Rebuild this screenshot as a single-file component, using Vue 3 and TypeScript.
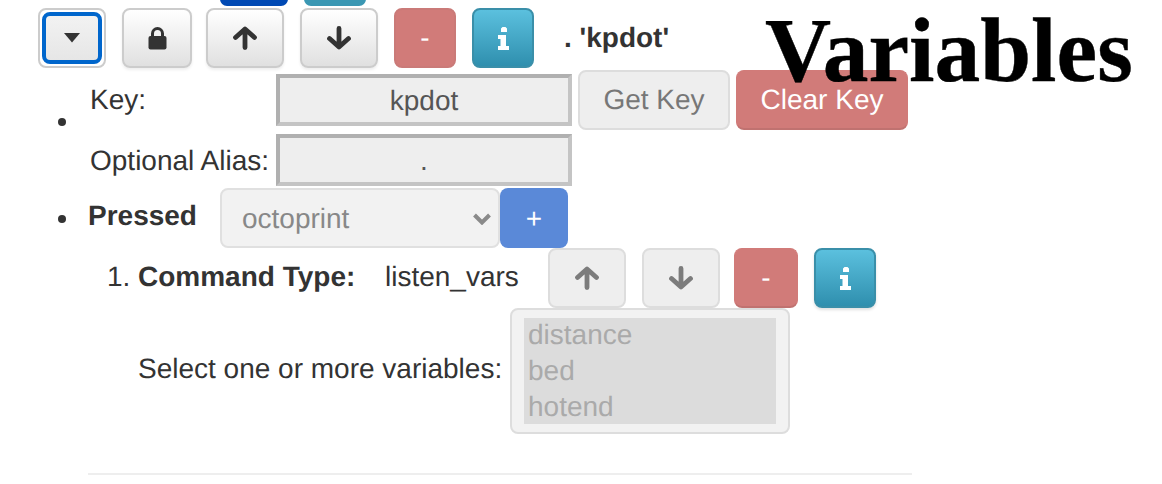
<script setup lang="ts">
const variables: string[] = ['distance', 'bed', 'hotend']
</script>

<template>
  <div class="page">
    <h1 class="title">Variables</h1>

    <div class="clipped-row">
      <span class="stub stub-blue"></span>
      <span class="stub stub-teal"></span>
    </div>

    <div class="toolbar">
      <span class="focus-ring">
        <button class="btn btn-default btn-focus" type="button">
          <svg class="icon" width="16" height="10" viewBox="0 0 16 10"><path d="M0 0h16l-8 9.500z" fill="#333" /></svg>
        </button>
      </span>
      <button class="btn btn-default btn-lock" type="button">
        <svg width="19" height="23" viewBox="0 0 19 23">
          <path d="M4.500 10V6.500a5 5 0 0 1 10 0V10" fill="none" stroke="#333" stroke-width="3" />
          <rect x="0.500" y="9" width="18" height="13.500" rx="2" fill="#333" />
        </svg>
      </button>
      <button class="btn btn-default btn-arrow" type="button">
        <svg width="24" height="24" viewBox="0 0 24 24"><path d="M2.500 11.500 12 3 21.500 11.500M12 5v16.500" fill="none" stroke="#333" stroke-width="4.800" stroke-linecap="round" stroke-linejoin="round" /></svg>
      </button>
      <button class="btn btn-default btn-arrow" type="button">
        <svg width="24" height="24" viewBox="0 0 24 24"><path d="M2.500 12.500 12 21 21.500 12.500M12 19V2.500" fill="none" stroke="#333" stroke-width="4.800" stroke-linecap="round" stroke-linejoin="round" /></svg>
      </button>
      <button class="btn btn-danger btn-small" type="button">-</button>
      <button class="btn btn-info btn-small" type="button">
        <svg width="11" height="23" viewBox="0 0 11 23"><path d="M3 1.500 4.500 0h3L9 1.500V5H3zM0 8h8v11h3v4H0v-4h2.500v-7H0z" fill="#fff" /></svg>
      </button>
      <strong class="key-title">. 'kpdot'</strong>
    </div>

    <div class="key-block">
      <span class="bullet bullet-key"></span>
      <div class="key-fields">
        <div class="field-row field-row-key">
          <label class="field-label">Key:</label>
          <input class="text-input" value="kpdot" readonly />
          <button class="btn btn-plain btn-get" type="button">Get Key</button>
          <button class="btn btn-clear" type="button">Clear Key</button>
        </div>
        <div class="field-row field-row-alias">
          <label class="field-label">Optional Alias:</label>
          <input class="text-input" value="." readonly />
        </div>
      </div>
    </div>

    <div class="pressed-row">
      <span class="bullet"></span>
      <strong class="pressed-label">Pressed</strong>
      <div class="select-box">
        <span>octoprint</span>
        <svg width="20" height="12" viewBox="0 0 20 12"><path d="M2.500 2 10 9.500 17.500 2" fill="none" stroke="#8a8a8a" stroke-width="4" /></svg>
      </div>
      <button class="btn btn-add" type="button">+</button>
    </div>

    <div class="command-row">
      <span class="ordinal">1.</span>
      <strong class="command-label">Command Type:</strong>
      <span class="command-value">listen_vars</span>
      <button class="btn btn-plain btn-arrow" type="button">
        <svg width="24" height="24" viewBox="0 0 24 24"><path d="M2.500 11.500 12 3 21.500 11.500M12 5v16.500" fill="none" stroke="#7c7c7c" stroke-width="4.800" stroke-linecap="round" stroke-linejoin="round" /></svg>
      </button>
      <button class="btn btn-plain btn-arrow btn-down2" type="button">
        <svg width="24" height="24" viewBox="0 0 24 24"><path d="M2.500 12.500 12 21 21.500 12.500M12 19V2.500" fill="none" stroke="#7c7c7c" stroke-width="4.800" stroke-linecap="round" stroke-linejoin="round" /></svg>
      </button>
      <button class="btn btn-clear btn-minus2" type="button">-</button>
      <button class="btn btn-info btn-small btn-info2" type="button">
        <svg width="11" height="23" viewBox="0 0 11 23"><path d="M3 1.500 4.500 0h3L9 1.500V5H3zM0 8h8v11h3v4H0v-4h2.500v-7H0z" fill="#fff" /></svg>
      </button>
    </div>

    <div class="vars-row">
      <label class="vars-label">Select one or more variables:</label>
      <div class="listbox">
        <div class="listbox-inner">
          <div v-for="name in variables" :key="name" class="option">{{ name }}</div>
        </div>
      </div>
    </div>

    <hr class="rule" />
  </div>
</template>

<style>
html, body { margin: 0; background: #fff; }
</style>

<style scoped>
.page {
  position: relative;
  width: 1162px;
  height: 484px;
  overflow: hidden;
  background: #fff;
  color: #333;
  font-family: "Liberation Sans", Arial, sans-serif;
  font-size: 28px;
  line-height: 40px;
  text-rendering: geometricPrecision;
}
.title {
  position: absolute;
  z-index: 2;
  left: 765px;
  top: 0;
  margin: 0;
  color: #000;
  font-family: "Liberation Serif", "Times New Roman", serif;
  font-size: 91.500px;
  font-weight: 700;
  line-height: 100px;
  white-space: nowrap;
  -webkit-text-stroke: 0.4px #000;
}
.clipped-row {
  display: flex;
  height: 6px;
  padding-left: 220px;
  gap: 16px;
  align-items: flex-end;
  position: relative;
}
.stub {
  display: block;
  height: 20px;
  border-radius: 0 0 7px 7px;
  flex: none;
}
.stub-blue { width: 68px; background: #0049b4; }
.stub-teal { width: 62px; background: #3a97b3; }

.btn {
  box-sizing: border-box;
  display: inline-flex;
  align-items: center;
  justify-content: center;
  flex: none;
  margin: 0;
  padding: 0;
  height: 60px;
  border: 2px solid #ccc;
  border-radius: 8px;
  font-family: inherit;
  font-size: 28px;
  color: #333;
  position: relative;
  text-rendering: geometricPrecision;
}
.btn-default {
  background: linear-gradient(#fff, #e0e0e0);
  box-shadow: inset 0 2px 0 rgba(255, 255, 255, .15), 0 2px 3px rgba(0, 0, 0, .07);
}
.toolbar {
  display: flex;
  align-items: center;
  height: 60px;
  margin-top: 2px;
  padding-left: 38px;
  position: relative;
}
.focus-ring {
  box-sizing: border-box;
  display: flex;
  width: 68px;
  height: 60px;
  padding: 2px;
  border: 2px solid #ccc;
  border-radius: 8px;
  background: #fff;
  margin-right: 16px;
}
.btn-focus {
  width: 60px;
  height: 52px;
  border: 4px solid #0066cc;
  border-radius: 8px;
  margin: 0;
  background: linear-gradient(#f2f2f2, #e6e6e6);
  box-shadow: none;
}
.icon { display: block; }
.btn-lock { width: 70px; margin-right: 14px; }
.btn-arrow { width: 78px; margin-right: 16px; }
.btn-small { width: 62px; margin-right: 16px; }
.btn-danger {
  background: #d17b79;
  border-color: #ca7a78;
  color: #fff;
}
.btn-info {
  background: linear-gradient(#5bc0de, #2f8fae);
  border-color: #3a8fa9;
  color: #fff;
}
.key-title { margin-left: 14px; font-size: 28px; }

.key-block {
  display: flex;
  align-items: flex-start;
  margin-top: 2px;
  padding-left: 58px;
  height: 118px;
}
.bullet {
  display: block;
  flex: none;
  width: 8px;
  height: 8px;
  border-radius: 50%;
  background: #333;
}
.bullet-key { margin-top: 48px; }
.key-fields { margin-left: 24px; }
.field-row { display: flex; align-items: center; }
.field-row-key { height: 60px; }
.field-row-key .field-label { margin-top: 0; }
.field-row-alias { height: 52px; margin-top: 4px; }
.field-row-alias .field-label { margin-top: 2px; }
.field-label { width: 186px; flex: none; }
.text-input {
  box-sizing: border-box;
  display: block;
  width: 296px;
  height: 52px;
  padding: 2px 0 0;
  border-width: 4px;
  border-style: solid;
  border-color: #b0b0b0 #c4c4c4 #c4c4c4 #b0b0b0;
  border-radius: 0;
  background: #eee;
  color: #555;
  font-family: inherit;
  font-size: 28px;
  text-align: center;
  text-rendering: geometricPrecision;
}
.btn-get { width: 152px; margin-left: 6px; margin-right: 6px; }
.btn-plain {
  background: #eee;
  border: 2px solid #ddd;
  color: #777;
}
.btn-clear {
  background: #d17b79;
  border: 1px solid #d17b79;
  border-bottom: 2px solid #c07270;
  color: #fff;
  width: 172px;
}
.pressed-row {
  display: flex;
  align-items: flex-start;
  height: 60px;
  padding-left: 58px;
}
.pressed-row .bullet { margin-top: 27px; }
.pressed-label { margin-left: 22px; width: 132px; flex: none; line-height: 56px; }
.select-box {
  box-sizing: border-box;
  display: flex;
  align-items: center;
  justify-content: space-between;
  width: 280px;
  height: 60px;
  padding: 2px 6px 0 20px;
  border: 2px solid #e0e0e0;
  border-radius: 8px;
  background: #f2f2f2;
  color: #888;
}
.btn-add {
  width: 68px;
  background: #5a89d8;
  border: none;
  color: #fff;
  font-size: 28px;
  padding-top: 2px;
}
.command-row {
  display: flex;
  align-items: flex-start;
  height: 60px;
  line-height: 58px;
  padding-left: 107px;
}
.ordinal { width: 31px; flex: none; }
.command-label { width: 247px; flex: none; }
.command-value { width: 163px; flex: none; }
.command-row .btn-down2 { margin-right: 14px; }
.btn-minus2 { width: 64px; margin-right: 16px; }
.btn-info2 { box-shadow: 0 2px 3px rgba(0, 0, 0, .12); }

.vars-row {
  display: flex;
  align-items: center;
  padding-left: 138px;
  height: 126px;
}
.vars-label { width: 372px; flex: none; margin-top: -4px; }
.listbox {
  box-sizing: border-box;
  width: 280px;
  height: 126px;
  padding: 8px 12px;
  border: 2px solid #ddd;
  border-radius: 8px;
  background: #f2f2f2;
}
.listbox-inner {
  display: flow-root;
  height: 106px;
  background: #dcdcdc;
  color: #aaa;
  padding: 0 4px;
}
.option { line-height: 36px; height: 36px; }
.option:first-child { margin-top: -1px; }
.rule {
  box-sizing: border-box;
  width: 824px;
  height: 2px;
  margin: 39px 0 0 88px;
  border: none;
  background: #eee;
}
</style>
